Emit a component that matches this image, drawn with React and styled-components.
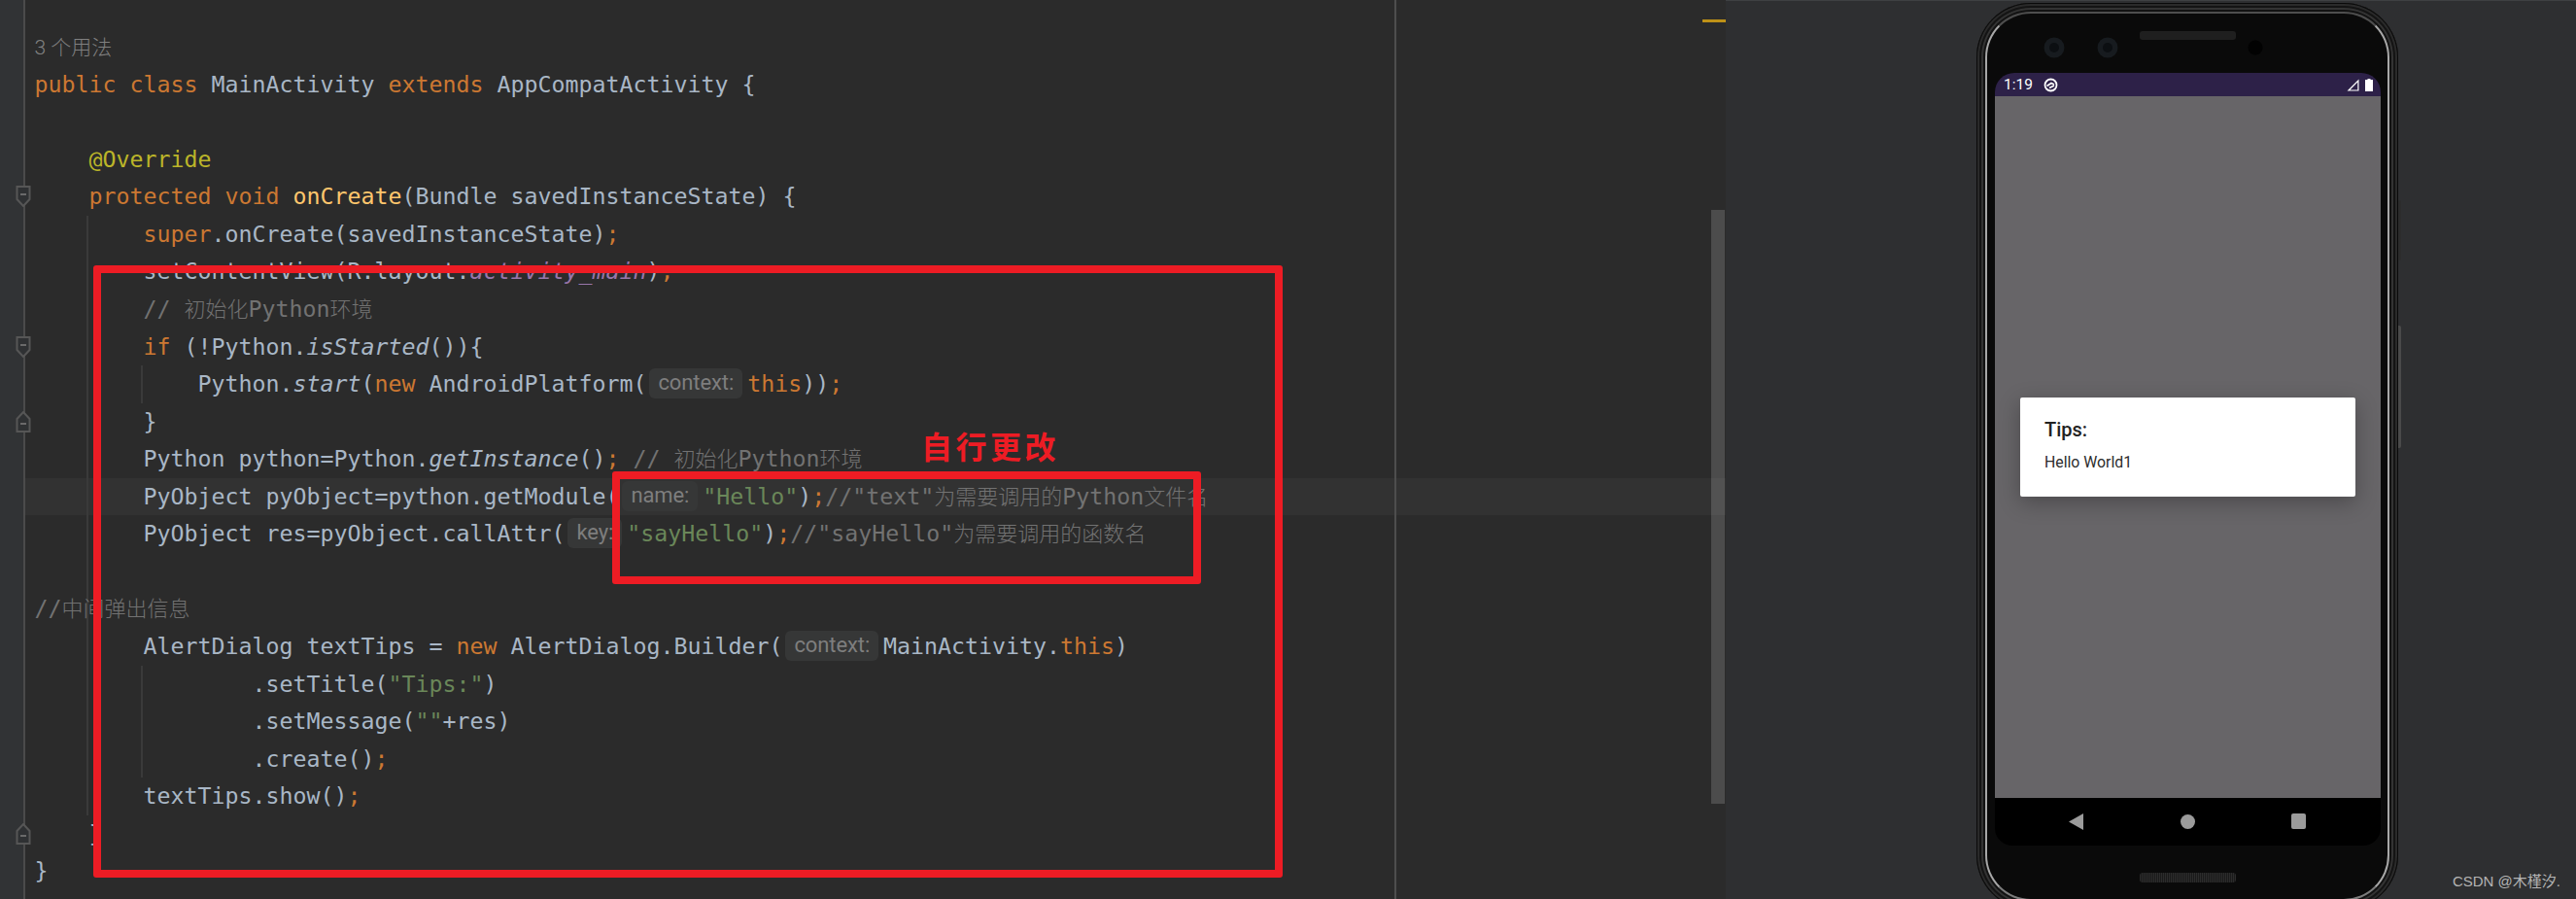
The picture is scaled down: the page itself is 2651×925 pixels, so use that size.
import styled, { createGlobalStyle } from 'styled-components';

const Global = createGlobalStyle`
  html, body {
    margin: 0;
    width: 2651px;
    height: 925px;
    overflow: hidden;
    background: #2e2f31;
  }
`;

const Page = styled.div`
  display: flex;
  width: 2651px;
  height: 925px;
  overflow: hidden;
  position: relative;
`;

/* ---------- editor ---------- */
const Editor = styled.div`
  position: relative;
  width: 1776px;
  height: 925px;
  padding-top: 29px;
  box-sizing: border-box;
  overflow: hidden;
  background: linear-gradient(90deg, #313335 24px, #4b4b4b 24px 26px, #2b2b2b 26px);
  font-family: 'DejaVu Sans Mono', 'Noto Sans CJK SC', monospace;
  font-size: 23.26px;
  color: #a9b7c6;
`;

const guideBg = 'linear-gradient(#3a3a3a, #3a3a3a)';
const Line = styled.div`
  position: relative;
  height: 38.57px;
  line-height: 38.57px;
  margin-left: 26px;
  padding-left: 9.5px;
  white-space: pre;
  background-color: ${(p) => (p.$current ? '#323232' : 'transparent')};
  background-image: ${(p) =>
    p.$guides ? Array(p.$guides).fill(guideBg).join(',') : 'none'};
  background-repeat: no-repeat;
  background-size: 2px 100%;
  background-position: 63px 0, 119px 0;
`;

const Kw = styled.span`
  color: #cc7832;
`;
const Str = styled.span`
  color: #6a8759;
`;
const Note = styled.span`
  color: #727272;
`;
const Method = styled.span`
  color: #ffc66d;
`;
const Annotation = styled.span`
  color: #bbb529;
`;
const Field = styled.span`
  color: #9876aa;
  font-style: italic;
`;
const Static = styled.span`
  font-style: italic;
`;
const Cjk = styled.span`
  font-family: 'Noto Sans CJK SC', sans-serif;
  font-size: 22px;
  line-height: 1;
  font-weight: 300;
  color: #727272;
`;
const Usages = styled.span`
  font-family: 'Roboto', 'Noto Sans CJK SC', sans-serif;
  font-size: 21px;
  line-height: 1;
  font-weight: 300;
  color: #808080;
`;
const Inlay = styled.span`
  display: inline-block;
  height: 31px;
  line-height: 30px;
  margin: 3px 5px 0 3px;
  padding: 0 9px;
  border-radius: 6px;
  background: #363737;
  color: #7e7e7e;
  font-family: 'Roboto', sans-serif;
  font-size: 22px;
  letter-spacing: -0.1px;
  vertical-align: top;
`;

const FoldSvg = styled.svg`
  position: absolute;
  left: -10px;
  top: 8px;
  width: 16px;
  height: 22px;
`;

function Fold({ end }) {
  return (
    <FoldSvg viewBox="0 0 16 22">
      <path
        d={end ? 'M1.5 21 H14.5 V8 L8 1 L1.5 8 Z' : 'M1.5 1 H14.5 V14 L8 21 L1.5 14 Z'}
        fill="#2f3133"
        stroke="#565656"
        strokeWidth="2"
      />
      <path d={end ? 'M5 13 H11' : 'M5 9 H11'} stroke="#6a6a6a" strokeWidth="2" />
    </FoldSvg>
  );
}

const MarginLine = styled.div`
  position: absolute;
  left: 1435px;
  top: 0;
  bottom: 0;
  width: 2px;
  background: #4e4e4e;
`;
const Stripe = styled.div`
  position: absolute;
  left: 1752px;
  top: 20px;
  width: 24px;
  height: 3px;
  background: #be9117;
`;
const Thumb = styled.div`
  position: absolute;
  left: 1761px;
  top: 216px;
  width: 14px;
  height: 611px;
  background: rgba(255, 255, 255, 0.155);
`;
const RedBox = styled.div`
  position: absolute;
  box-sizing: border-box;
  left: ${(p) => p.$x}px;
  top: ${(p) => p.$y}px;
  width: ${(p) => p.$w}px;
  height: ${(p) => p.$h}px;
  border: 8px solid #ed1c24;
  border-radius: 3px;
`;
const RedLabel = styled.div`
  position: absolute;
  left: 948px;
  top: 436px;
  font-family: 'Noto Sans CJK SC', sans-serif;
  font-size: 32px;
  line-height: 44px;
  font-weight: 700;
  letter-spacing: 3.5px;
  color: #ed1c24;
`;

/* ---------- emulator side ---------- */
const Side = styled.div`
  position: relative;
  flex: 1;
  height: 925px;
  box-sizing: border-box;
  padding: 3px 0 0 258px;
  background: #2e2f31;
  border-top: 1px solid #3e4042;
`;
const Frame = styled.div`
  position: relative;
  box-sizing: border-box;
  width: 434px;
  height: 933px;
  margin-top: -1px;
  padding: 9px;
  border-radius: 56px;
  background: #121212;
  box-shadow: inset 0 0 0 1px #0a0a0a, inset 0 0 0 3px #2a2a2a, inset 0 0 0 5px #141414,
    inset 0 0 0 7px #333;
`;
const SideKey = styled.div`
  position: absolute;
  left: 434px;
  top: ${(p) => p.$y}px;
  width: 3px;
  height: ${(p) => p.$h}px;
  background: ${(p) => p.$c};
  border-radius: 0 2px 2px 0;
`;
const Bezel = styled.div`
  box-sizing: border-box;
  height: 100%;
  padding: 0 7px 0 8px;
  border: 2px solid;
  border-color: #4e4e4e #a8a8a8 #7c7c7c #a8a8a8;
  border-radius: 47px;
  background: #0a0a0a;
  display: flex;
  flex-direction: column;
`;
const TopBezel = styled.svg`
  display: block;
  flex: none;
  width: 397px;
  height: 61px;
`;
const Screen = styled.div`
  flex: none;
  display: flex;
  flex-direction: column;
  height: 794.5px;
`;
const StatusBar = styled.div`
  flex: none;
  height: 24px;
  padding: 0 8px 0 9px;
  display: flex;
  align-items: center;
  border-radius: 20px 20px 0 0;
  background: #2d2148;
  color: #fff;
  font-family: 'Roboto', sans-serif;
  font-size: 15.5px;
`;
const StatusIcon = styled.svg`
  display: block;
  margin-left: ${(p) => p.$gap || 0}px;
`;
const Spacer = styled.div`
  flex: 1;
`;
const Content = styled.div`
  flex: 1;
  display: flex;
  align-items: center;
  justify-content: center;
  background: #676568;
`;
const Dialog = styled.div`
  box-sizing: border-box;
  width: 345px;
  height: 102px;
  padding: 18px 25px 0;
  border-radius: 2px;
  background: #fff;
  box-shadow: 0 6px 22px rgba(0, 0, 0, 0.28);
  font-family: 'Roboto', sans-serif;
`;
const DialogTitle = styled.div`
  font-size: 20px;
  line-height: 30px;
  font-weight: 500;
  color: #222;
`;
const DialogText = styled.div`
  margin-top: 7px;
  font-size: 15.8px;
  line-height: 24px;
  color: #2c2c2c;
`;
const NavBar = styled.div`
  flex: none;
  height: 48.5px;
  display: grid;
  grid-template-columns: 76px 15px 100px 15px 99px 15px;
  justify-items: center;
  align-items: center;
  border-radius: 0 0 18px 18px;
  background: #000;
`;
const BackKey = styled.svg`
  grid-column: 2;
  width: 15px;
  height: 17px;
`;
const HomeKey = styled.div`
  grid-column: 4;
  width: 15px;
  height: 15px;
  border-radius: 50%;
  background: #9b9b9b;
`;
const RecentKey = styled.div`
  grid-column: 6;
  width: 15px;
  height: 16px;
  border-radius: 2px;
  background: #9b9b9b;
`;
const BottomBezel = styled.div`
  flex: 1;
  display: flex;
  justify-content: center;
  padding-top: 28px;
`;
const Grille = styled.div`
  width: 99px;
  height: 10px;
  border-radius: 3px;
  background: repeating-linear-gradient(90deg, #2c2c2c 0 1px, #1a1a1a 1px 2px);
`;
const Watermark = styled.div`
  position: absolute;
  right: 16px;
  bottom: 8px;
  font-family: 'Liberation Sans', 'Noto Sans CJK SC', sans-serif;
  font-size: 15px;
  line-height: 20px;
  color: #b4b4b4;
`;

export default function App() {
  return (
    <Page>
      <Global />
      <Editor>
        <Line>
          <Usages>3 个用法</Usages>
        </Line>
        <Line>
          <Kw>public class</Kw> MainActivity <Kw>extends</Kw> AppCompatActivity {'{'}
        </Line>
        <Line />
        <Line>
          {'    '}
          <Annotation>@Override</Annotation>
        </Line>
        <Line>
          <Fold />
          {'    '}
          <Kw>protected void</Kw> <Method>onCreate</Method>(Bundle savedInstanceState) {'{'}
        </Line>
        <Line $guides={1}>
          {'        '}
          <Kw>super</Kw>.onCreate(savedInstanceState)<Kw>;</Kw>
        </Line>
        <Line $guides={1}>
          {'        '}setContentView(R.layout.<Field>activity_main</Field>)<Kw>;</Kw>
        </Line>
        <Line $guides={1}>
          {'        '}
          <Note>// </Note>
          <Cjk>初始化</Cjk>
          <Note>Python</Note>
          <Cjk>环境</Cjk>
        </Line>
        <Line $guides={1}>
          <Fold />
          {'        '}
          <Kw>if</Kw> (!Python.<Static>isStarted</Static>()){'{'}
        </Line>
        <Line $guides={2}>
          {'            '}Python.<Static>start</Static>(<Kw>new</Kw> AndroidPlatform(
          <Inlay>context:</Inlay>
          <Kw>this</Kw>))<Kw>;</Kw>
        </Line>
        <Line $guides={1}>
          <Fold end />
          {'        }'}
        </Line>
        <Line $guides={1}>
          {'        '}Python python=Python.<Static>getInstance</Static>()<Kw>;</Kw>{' '}
          <Note>// </Note>
          <Cjk>初始化</Cjk>
          <Note>Python</Note>
          <Cjk>环境</Cjk>
        </Line>
        <Line $guides={1} $current>
          {'        '}PyObject pyObject=python.getModule(
          <Inlay>name:</Inlay>
          <Str>"Hello"</Str>)<Kw>;</Kw>
          <Note>//"text"</Note>
          <Cjk>为需要调用的</Cjk>
          <Note>Python</Note>
          <Cjk>文件名</Cjk>
        </Line>
        <Line $guides={1}>
          {'        '}PyObject res=pyObject.callAttr(
          <Inlay>key:</Inlay>
          <Str>"sayHello"</Str>)<Kw>;</Kw>
          <Note>//"sayHello"</Note>
          <Cjk>为需要调用的函数名</Cjk>
        </Line>
        <Line $guides={1} />
        <Line $guides={1}>
          <Note>//</Note>
          <Cjk>中间弹出信息</Cjk>
        </Line>
        <Line $guides={1}>
          {'        '}AlertDialog textTips = <Kw>new</Kw> AlertDialog.Builder(
          <Inlay>context:</Inlay>
          MainActivity.<Kw>this</Kw>)
        </Line>
        <Line $guides={2}>
          {'                '}.setTitle(<Str>"Tips:"</Str>)
        </Line>
        <Line $guides={2}>
          {'                '}.setMessage(<Str>""</Str>+res)
        </Line>
        <Line $guides={2}>
          {'                '}.create()<Kw>;</Kw>
        </Line>
        <Line $guides={1}>
          {'        '}textTips.show()<Kw>;</Kw>
        </Line>
        <Line>
          <Fold end />
          {'    }'}
        </Line>
        <Line>{'}'}</Line>

        <MarginLine />
        <Stripe />
        <Thumb />
        <RedBox $x={96} $y={273} $w={1224} $h={630} />
        <RedBox $x={630} $y={485} $w={606} $h={116} />
        <RedLabel>自行更改</RedLabel>
      </Editor>

      <Side>
        <Frame>
          <SideKey $y={203} $h={62} $c="#2c2c2c" />
          <SideKey $y={332} $h={126} $c="#4a4a4a" />
          <Bezel>
            <TopBezel viewBox="0 0 397 61">
              <circle cx="61" cy="35" r="10.5" fill="#171b1f" />
              <circle cx="61" cy="35" r="5" fill="#0c0f12" />
              <circle cx="116" cy="35" r="10.5" fill="#171b1f" />
              <circle cx="116" cy="35" r="5" fill="#0c0f12" />
              <rect x="149" y="18" width="99" height="9" rx="3" fill="#1f1f1f" />
              <circle cx="268" cy="35" r="7.5" fill="#020202" />
            </TopBezel>
            <Screen>
              <StatusBar>
                1:19
                <StatusIcon $gap={11} width="15" height="15" viewBox="0 0 15 15">
                  <circle cx="7.5" cy="7.5" r="6" fill="none" stroke="#fff" strokeWidth="1.8" />
                  <path d="M3.5 8.5 L8 5.5 L11 7 M6 10.5 L11 8" fill="none" stroke="#fff" strokeWidth="1.8" />
                </StatusIcon>
                <Spacer />
                <StatusIcon width="13" height="13" viewBox="0 0 12 13">
                  <path d="M0 12.5 L12 0.5 V12.5 Z M10.8 3.4 L3 11.4 H10.8 Z" fill="#fff" fillRule="evenodd" />
                </StatusIcon>
                <StatusIcon $gap={6} width="8" height="13" viewBox="0 0 8 13">
                  <path d="M2.5 0 H5.5 V1 H8 V13 H0 V1 H2.5 Z" fill="#fff" />
                </StatusIcon>
              </StatusBar>
              <Content>
                <Dialog>
                  <DialogTitle>Tips:</DialogTitle>
                  <DialogText>Hello World1</DialogText>
                </Dialog>
              </Content>
              <NavBar>
                <BackKey viewBox="0 0 15 17">
                  <path d="M15 0 V17 L0 8.5 Z" fill="#9b9b9b" />
                </BackKey>
                <HomeKey />
                <RecentKey />
              </NavBar>
            </Screen>
            <BottomBezel>
              <Grille />
            </BottomBezel>
          </Bezel>
        </Frame>
        <Watermark>CSDN @木槿汐.</Watermark>
      </Side>
    </Page>
  );
}
